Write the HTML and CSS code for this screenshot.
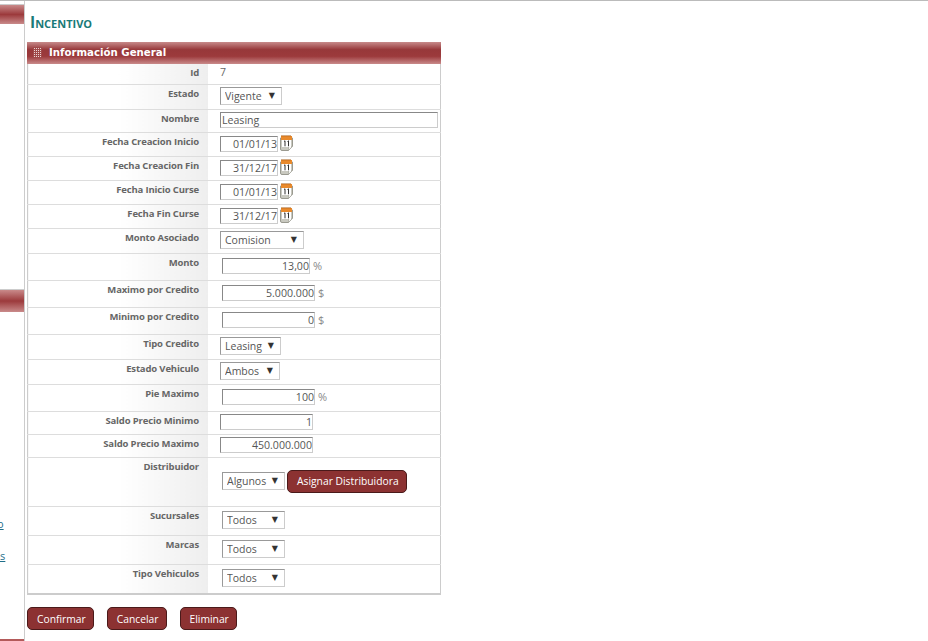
FILE: index.html
```html
<!DOCTYPE html>
<html lang="es">
<head>
  <meta charset="UTF-8">
  <title>Incentivo</title>
  <link rel="stylesheet" href="styles.css">
</head>
<body>
<svg class="defs" width="0" height="0">
  <symbol id="cal" viewBox="0 0 13 16">
    <path d="M.5 3h12v8l-4 4.500H2q-1.500 0-1.500-1.500z" fill="#c9c9c0" stroke="#9a9a90" stroke-width="1"/>
    <path d="M8.500 15.500v-4h4z" fill="#f4f4f0" stroke="#9a9a90" stroke-width=".6"/>
    <rect x="1" y="1" width="11" height="4" fill="#e98a2c"/>
    <path d="M2 0v1.500M4 0v1.500M6 0v1.500M8 0v1.500M10 0v1.500" stroke="#a85a10" stroke-width="1"/>
    <rect x="2" y="5" width="9" height="7" fill="#fff"/>
    <path d="M4 6.500l1-.7v5.500M7.500 6.500l1-.7v5.500" fill="none" stroke="#333" stroke-width="1"/>
  </symbol>
</svg>
<div class="page">
  <aside class="side">
    <div class="side-bar first"></div>
    <div class="side-bar second"></div>
    <a class="side-link one" href="#">o</a>
    <a class="side-link two" href="#">as</a>
    <div class="side-end"></div>
  </aside>
  <main class="content">
    <h1 class="title">Incentivo</h1>
    <div class="panel">
      <div class="panel-head"><span class="dots"></span>Información General</div>
      <table class="form">
        <tr class="r-id"><th>Id</th><td class="plain">7</td></tr>
        <tr class="r-sel"><th>Estado</th><td><span class="sel w62"><select><option>Vigente</option></select></span></td></tr>
        <tr class="r-name"><th>Nombre</th><td><input class="txt left w218" value="Leasing"></td></tr>
        <tr class="r-date"><th>Fecha Creacion Inicio</th><td><div class="line"><input class="txt w58" value="01/01/13"><svg class="cal"><use href="#cal"/></svg></div></td></tr>
        <tr class="r-date"><th>Fecha Creacion Fin</th><td><div class="line"><input class="txt w58" value="31/12/17"><svg class="cal"><use href="#cal"/></svg></div></td></tr>
        <tr class="r-date"><th>Fecha Inicio Curse</th><td><div class="line"><input class="txt w58" value="01/01/13"><svg class="cal"><use href="#cal"/></svg></div></td></tr>
        <tr class="r-date"><th>Fecha Fin Curse</th><td><div class="line"><input class="txt w58" value="31/12/17"><svg class="cal"><use href="#cal"/></svg></div></td></tr>
        <tr class="r-sel"><th>Monto Asociado</th><td><span class="sel w84"><select><option>Comision</option></select></span></td></tr>
        <tr class="r-num"><th>Monto</th><td><div class="line in2"><input class="txt w88" value="13,00"><span class="unit">%</span></div></td></tr>
        <tr class="r-num"><th>Maximo por Credito</th><td><div class="line in2"><input class="txt w93" value="5.000.000"><span class="unit">$</span></div></td></tr>
        <tr class="r-num"><th>Minimo por Credito</th><td><div class="line in2"><input class="txt w93" value="0"><span class="unit">$</span></div></td></tr>
        <tr class="r-sel"><th>Tipo Credito</th><td><span class="sel w61"><select><option>Leasing</option></select></span></td></tr>
        <tr class="r-sel"><th>Estado Vehiculo</th><td><span class="sel w60"><select><option>Ambos</option></select></span></td></tr>
        <tr class="r-num"><th>Pie Maximo</th><td><div class="line in2"><input class="txt w93" value="100"><span class="unit">%</span></div></td></tr>
        <tr class="r-saldo"><th>Saldo Precio Minimo</th><td><input class="txt w93" value="1"></td></tr>
        <tr class="r-saldo"><th>Saldo Precio Maximo</th><td><input class="txt w93" value="450.000.000"></td></tr>
        <tr class="r-dist"><th>Distribuidor</th><td><div class="line in2"><span class="sel w63"><select><option>Algunos</option></select></span><button class="btn asignar">Asignar Distribuidora</button></div></td></tr>
        <tr class="r-todos"><th>Sucursales</th><td><span class="sel w63 in2"><select><option>Todos</option></select></span></td></tr>
        <tr class="r-todos"><th>Marcas</th><td><span class="sel w63 in2"><select><option>Todos</option></select></span></td></tr>
        <tr class="r-todos last"><th>Tipo Vehiculos</th><td><span class="sel w63 in2"><select><option>Todos</option></select></span></td></tr>
      </table>
    </div>
    <div class="actions">
      <button class="btn">Confirmar</button>
      <button class="btn">Cancelar</button>
      <button class="btn">Eliminar</button>
    </div>
  </main>
</div>
</body>
</html>
```

FILE: styles.css
```css
html, body {
  margin: 0;
  padding: 0;
  height: 641px;
  overflow: hidden;
  background: #fff;
  font-family: "Open Sans", "Liberation Sans", sans-serif;
  font-size: 11px;
  color: #666;
}
.defs {
  display: block;
  height: 0;
}
.page {
  display: flex;
  height: 640px;
  border-top: 1px solid #bbb;
}

/* columna izquierda, casi fuera de la pantalla */
.side {
  width: 24px;
  flex: none;
  border-right: 1px solid #ccc;
  overflow: hidden;
  display: flex;
  flex-direction: column;
  align-items: flex-start;
}
.side-bar {
  width: 100%;
  border-top: 1px solid #ccc;
  background: linear-gradient(#c98a8a, #9c3a3c 50%, #c98a8a);
}
.side-bar.first {
  height: 19px;
  margin-top: 3px;
}
.side-bar.second {
  height: 22px;
  margin-top: 265px;
}
.side-link {
  color: #1f6f8b;
  font-size: 11px;
  line-height: 14px;
}
.side-link.one {
  margin-top: 205px;
  margin-left: -3px;
}
.side-link.two {
  margin-top: 18px;
  margin-left: -6px;
}
.side-end {
  width: 100%;
  height: 2px;
  margin-top: auto;
  background: #b45a5a;
}

.content {
  flex: 1;
  padding-left: 2px;
}
.title {
  margin: 13px 0 12px 3px;
  font-size: 15.5px;
  line-height: 16px;
  font-weight: 700;
  font-variant: small-caps;
  color: #1a7a78;
}
.panel {
  width: 414px;
  box-sizing: border-box;
}
.panel-head {
  height: 22px;
  box-sizing: border-box;
  display: flex;
  align-items: center;
  padding-left: 6px;
  padding-bottom: 1px;
  background: linear-gradient(#c78a8a, #97383a 35%, #9c3a3c 65%, #c98a8a);
  color: #fff;
  font-family: "DejaVu Sans", sans-serif;
  font-size: 10.2px;
  font-weight: 700;
}
.dots {
  width: 9px;
  height: 11px;
  margin-right: 7px;
  background-color: #ecd6d6;
  background-image: linear-gradient(to right, #a04a4a 1px, transparent 1px), linear-gradient(to bottom, #a04a4a 1px, transparent 1px);
  background-size: 2px 2px;
}
.form {
  width: 100%;
  border-collapse: collapse;
  table-layout: fixed;
  border-left: 1px solid #ccc;
  border-right: 1px solid #ccc;
  border-bottom: 2px solid #ccc;
}
.form tr {
  border-bottom: 1px solid #ddd;
}
.form tr:last-child {
  border-bottom: 0;
}
.form th {
  width: 171px;
  padding: 2px 9px 0 0;
  text-align: right;
  vertical-align: top;
  font-size: 9.5px;
  letter-spacing: -0.15px;
  font-weight: 700;
  line-height: 14px;
  color: #666;
  background: linear-gradient(to right, #fff 50%, #eee);
}
.form td {
  padding: 2px 0 0 12px;
  vertical-align: top;
}
.r-id { height: 20px; }
.r-id td { padding-top: 0; font-size: 10.5px; line-height: 16px; }
.r-sel { height: 25px; }
.r-name { height: 23px; }
.r-date { height: 24px; }
.form .r-date td { padding-top: 3px; }
.r-num { height: 27px; }
.form .r-num td { padding-top: 4px; }
.r-saldo { height: 23px; }
.r-dist { height: 49px; }
.form .r-dist td { padding-top: 12px; }
.r-todos { height: 29px; }
.r-todos.last { height: 30px; }
.form .r-todos td { padding-top: 4px; }

.line {
  display: flex;
  align-items: center;
}
.in2 {
  margin-left: 2px;
}
.txt {
  box-sizing: border-box;
  height: 16px;
  margin: 0;
  padding: 1px 0 0 1px;
  border: 1px solid;
  border-color: #888 #ccc #ccc #888;
  background: #fff;
  font-family: inherit;
  font-size: 10.6px;
  color: #555;
  text-align: right;
  display: block;
}
.txt.left { text-align: left; }
.w218 { width: 218px; }
.w58 { width: 58px; }
.w88 { width: 88px; }
.w93 { width: 93px; }
.cal {
  width: 13px;
  height: 16px;
  margin: -2px 0 0 2px;
}
.unit {
  margin-left: 3px;
  font-size: 11px;
  color: #888;
}
.sel {
  position: relative;
  display: block;
  box-sizing: border-box;
  height: 18px;
  border: 1px solid;
  border-color: #999 #ccc #ccc #999;
}
.sel select {
  appearance: none;
  width: 100%;
  height: 16px;
  display: block;
  border: 0;
  padding: 0 0 0 4px;
  background: transparent;
  font-family: inherit;
  font-size: 10.5px;
  color: #555;
  outline: none;
}
.sel::after {
  content: "▼";
  position: absolute;
  right: 6px;
  top: 1px;
  font-family: "DejaVu Sans", sans-serif;
  font-size: 8px;
  line-height: 13px;
  color: #333;
  pointer-events: none;
}
.w60 { width: 60px; }
.w61 { width: 61px; }
.w62 { width: 62px; }
.w63 { width: 63px; }
.w84 { width: 84px; }
.sel.in2 { margin-left: 2px; }

.btn {
  height: 23px;
  padding: 0 7px 0 9px;
  border: 1px solid #4a1a1a;
  border-radius: 5px;
  background: #8c3232;
  color: #fff;
  font-family: inherit;
  font-size: 10.3px;
  cursor: pointer;
}
.asignar {
  margin-left: 2px;
}
.actions {
  display: flex;
  gap: 13px;
  margin-top: 12px;
}
```
